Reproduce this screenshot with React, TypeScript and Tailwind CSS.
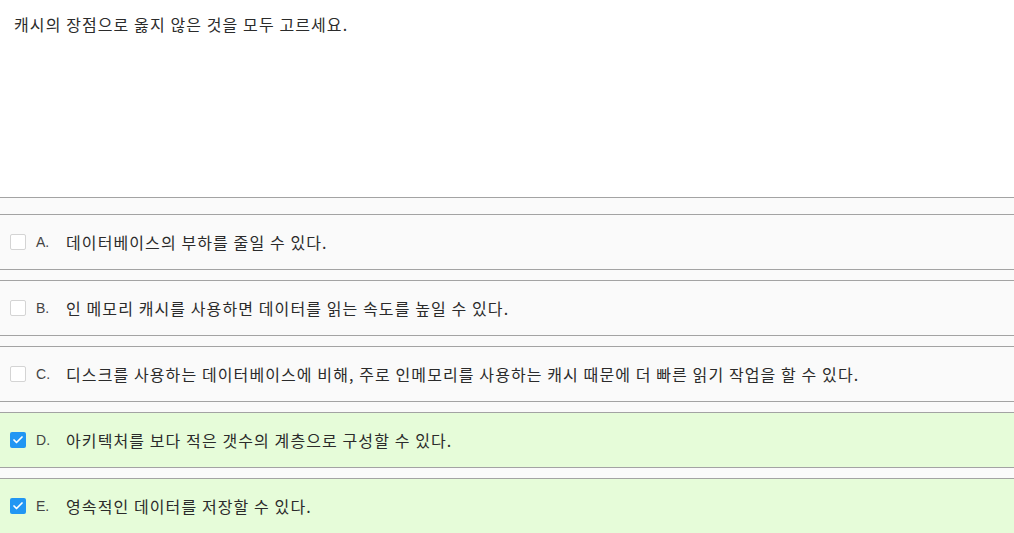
import { Check } from "lucide-react";

const options = [
  { key: "A", text: "데이터베이스의 부하를 줄일 수 있다.", checked: false },
  { key: "B", text: "인 메모리 캐시를 사용하면 데이터를 읽는 속도를 높일 수 있다.", checked: false },
  {
    key: "C",
    text: "디스크를 사용하는 데이터베이스에 비해, 주로 인메모리를 사용하는 캐시 때문에 더 빠른 읽기 작업을 할 수 있다.",
    checked: false,
  },
  { key: "D", text: "아키텍처를 보다 적은 갯수의 계층으로 구성할 수 있다.", checked: true },
  { key: "E", text: "영속적인 데이터를 저장할 수 있다.", checked: true },
];

export default function App() {
  return (
    <div
      className="w-[1014px] h-[533px] overflow-hidden bg-white text-[#2b2b2b]"
      style={{ fontFamily: "'Noto Sans CJK KR', 'Noto Sans', sans-serif" }}
    >
      {/* Question */}
      <div className="h-[197px] px-[14px] pt-[12px] text-[16px] leading-[24px] tracking-[1.1px]">
        캐시의 장점으로 옳지 않은 것을 모두 고르세요.
      </div>

      {/* Options */}
      <div className="border-t border-[#a3a3a3] bg-[#fafafa] pt-[6px]">
        {options.map((o) => (
          <label
            key={o.key}
            className={`mt-[10px] flex h-[56px] items-center border-y border-[#a3a3a3] pl-[10px] ${
              o.checked ? "bg-[#e6fcd9]" : "bg-[#fafafa]"
            }`}
          >
            {o.checked ? (
              <span className="flex h-[16px] w-[16px] items-center justify-center rounded-[2px] bg-[#2196f3]">
                <Check size={12} strokeWidth={3.5} color="#fff" />
              </span>
            ) : (
              <span className="h-[16px] w-[16px] rounded-[2px] border border-[#d4d4d4] bg-white" />
            )}
            <span
              className="ml-[10px] w-[30px] text-[14px] text-[#444]"
              style={{ fontFamily: "'Liberation Sans', Arial, sans-serif" }}
            >
              {o.key}.
            </span>
            <span className="text-[16px] tracking-[1.1px]">{o.text}</span>
          </label>
        ))}
      </div>
    </div>
  );
}
